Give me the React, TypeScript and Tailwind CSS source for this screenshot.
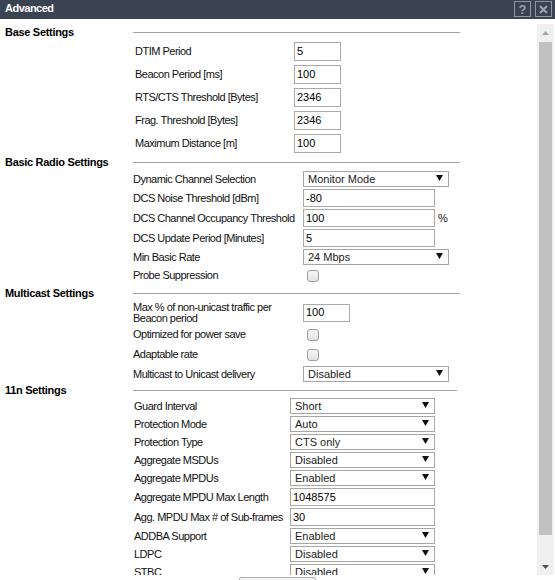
import React from "react";

function Heading({ title, line }: { title: string; line: string }) {
  return (
    <div className="flex h-full items-center">
      <div className="w-[133px] pl-[5px] text-[11px] font-bold tracking-[-0.3px] text-black">{title}</div>
      <div className={`border-t border-[#a3a3a3] ${line}`} />
    </div>
  )
}

function Select({ value, w }: { value: string; w: string }) {
  return (
    <div className={`flex h-[16px] items-center justify-between border border-[#a6a6a6] bg-white pl-[4px] pr-[5px] text-[11px] leading-none text-[#1c1c1c] ${w}`}>
      <span>{value}</span>
      <svg width="7" height="6" viewBox="0 0 7 6" className="mb-[2px]">
        <path d="M0 0h7L3.5 6z" fill="#111" />
      </svg>
    </div>
  )
}

function Field({ value, w, h = "h-[18px]" }: { value: string; w: string; h?: string }) {
  return (
    <div className={`flex items-center border border-[#a9a9a9] bg-white pl-[2px] text-[11px] leading-none text-black ${w} ${h}`}>
      {value}
    </div>
  )
}

function Check() {
  return <div className="ml-[4px] h-[12px] w-[12px] rounded-[3px] border border-[#9d9d9d] bg-gradient-to-b from-[#f7f7f7] to-[#e2e2e2]" />
}

function Row({ label, h, pad, col, children }: { label: React.ReactNode; h: string; pad: string; col: string; children: React.ReactNode }) {
  return (
    <div className={`flex items-center ${h}`}>
      <div className={`shrink-0 text-[11px] leading-[11px] tracking-[-0.5px] text-[#111] ${pad} ${col}`}>{label}</div>
      <div className="flex items-center">{children}</div>
    </div>
  )
}

export default function App() {
  return (
    <div className="flex h-[580px] w-[555px] flex-col overflow-hidden bg-white font-['Liberation_Sans',Arial,sans-serif]">
      {/* title bar */}
      <div className="flex h-[19px] shrink-0 items-start justify-between bg-[#3a4352]">
        <span className="pl-[5px] pt-[2px] text-[11px] font-bold leading-[13px] tracking-[-0.5px] text-white">Advanced</span>
        <div className="flex gap-[4px] pr-[3px] pt-[1px]">
          <div className="flex h-[16px] w-[17px] items-center justify-center border border-[#8f96a0] text-[13px] font-bold leading-none text-[#9ca2ab]">?</div>
          <div className="flex h-[16px] w-[17px] items-center justify-center border border-[#8f96a0]">
            <svg width="9" height="9" viewBox="0 0 9 9">
              <path d="M1 1l7 7M8 1L1 8" stroke="#9ca2ab" strokeWidth="2.2" />
            </svg>
          </div>
        </div>
      </div>

      {/* body */}
      <div className="mt-[5px] flex h-[551px] shrink-0">
        <div className="w-[537px] overflow-hidden">
          {/* Base Settings */}
          <div className="h-[16px]"><Heading title="Base Settings" line="w-[327px]" /></div>
          {[
            ["DTIM Period", "5"],
            ["Beacon Period [ms]", "100"],
            ["RTS/CTS Threshold [Bytes]", "2346"],
            ["Frag. Threshold [Bytes]", "2346"],
            ["Maximum Distance [m]", "100"],
          ].map(([l, v]) => (
            <Row key={l} label={l} h="h-[23px]" pad="pl-[135px]" col="w-[294px]">
              <Field value={v} w="w-[47px]" h="h-[19px]" />
            </Row>
          ))}

          {/* Basic Radio Settings */}
          <div className="h-[15px]"><Heading title="Basic Radio Settings" line="w-[327px]" /></div>
          <Row label="Dynamic Channel Selection" h="h-[18px]" pad="pl-[133px]" col="w-[303px]">
            <Select value="Monitor Mode" w="w-[146px]" />
          </Row>
          <Row label="DCS Noise Threshold [dBm]" h="h-[20px]" pad="pl-[133px]" col="w-[303px]">
            <Field value="-80" w="w-[132px]" />
          </Row>
          <Row label="DCS Channel Occupancy Threshold" h="h-[20px]" pad="pl-[133px]" col="w-[303px]">
            <Field value="100" w="w-[132px]" />
            <span className="pl-[3px] text-[11px] text-[#111]">%</span>
          </Row>
          <Row label="DCS Update Period [Minutes]" h="h-[20px]" pad="pl-[133px]" col="w-[303px]">
            <Field value="5" w="w-[132px]" />
          </Row>
          <Row label="Min Basic Rate" h="h-[18px]" pad="pl-[133px]" col="w-[303px]">
            <Select value="24 Mbps" w="w-[146px]" />
          </Row>
          <Row label="Probe Suppression" h="h-[19px]" pad="pl-[133px]" col="w-[303px]">
            <Check />
          </Row>

          {/* Multicast Settings */}
          <div className="h-[16px]"><Heading title="Multicast Settings" line="w-[327px]" /></div>
          <Row label={<>Max % of non-unicast traffic per<br />Beacon period</>} h="h-[23px]" pad="pl-[133px]" col="w-[303px]">
            <Field value="100" w="w-[47px]" />
          </Row>
          <Row label="Optimized for power save" h="h-[21px]" pad="pl-[133px]" col="w-[303px]">
            <Check />
          </Row>
          <Row label="Adaptable rate" h="h-[19px]" pad="pl-[133px]" col="w-[303px]">
            <Check />
          </Row>
          <Row label="Multicast to Unicast delivery" h="h-[20px]" pad="pl-[133px]" col="w-[303px]">
            <Select value="Disabled" w="w-[146px]" />
          </Row>

          {/* 11n Settings */}
          <div className="h-[13px]"><Heading title="11n Settings" line="w-[324px]" /></div>
          {[
            ["Guard Interval", "Short"],
            ["Protection Mode", "Auto"],
            ["Protection Type", "CTS only"],
            ["Aggregate MSDUs", "Disabled"],
            ["Aggregate MPDUs", "Enabled"],
          ].map(([l, v]) => (
            <Row key={l} label={l} h="h-[18px]" pad="pl-[134px]" col="w-[290px]">
              <Select value={v} w="w-[145px]" />
            </Row>
          ))}
          <Row label="Aggregate MPDU Max Length" h="h-[20px]" pad="pl-[134px]" col="w-[290px]">
            <Field value="1048575" w="w-[145px]" />
          </Row>
          <Row label="Agg. MPDU Max # of Sub-frames" h="h-[20px]" pad="pl-[134px]" col="w-[290px]">
            <Field value="30" w="w-[145px]" />
          </Row>
          {[
            ["ADDBA Support", "Enabled"],
            ["LDPC", "Disabled"],
            ["STBC", "Disabled"],
          ].map(([l, v]) => (
            <Row key={l} label={l} h="h-[18px]" pad="pl-[134px]" col="w-[290px]">
              <Select value={v} w="w-[145px]" />
            </Row>
          ))}
        </div>

        {/* scrollbar */}
        <div className="flex w-[17px] flex-col bg-[#f0f0f0]">
          <div className="flex h-[17px] items-center justify-center">
            <svg width="7" height="4" viewBox="0 0 7 4"><path d="M0 4h7L3.5 0z" fill="#a3a3a3" /></svg>
          </div>
          <div className="mx-[2px] mt-[1px] h-[493px] bg-[#c1c1c1]" />
          <div className="flex-1" />
          <div className="flex h-[17px] items-center justify-center">
            <svg width="7" height="4" viewBox="0 0 7 4"><path d="M0 0h7L3.5 4z" fill="#505050" /></svg>
          </div>
        </div>
        <div className="w-px" />
      </div>

      {/* footer */}
      <div className="flex justify-center pt-[2px]">
        <div className="h-[24px] w-[77px] rounded-[2px] border border-[#adadad] bg-[#f4f4f4]" />
      </div>
    </div>
  )
}
